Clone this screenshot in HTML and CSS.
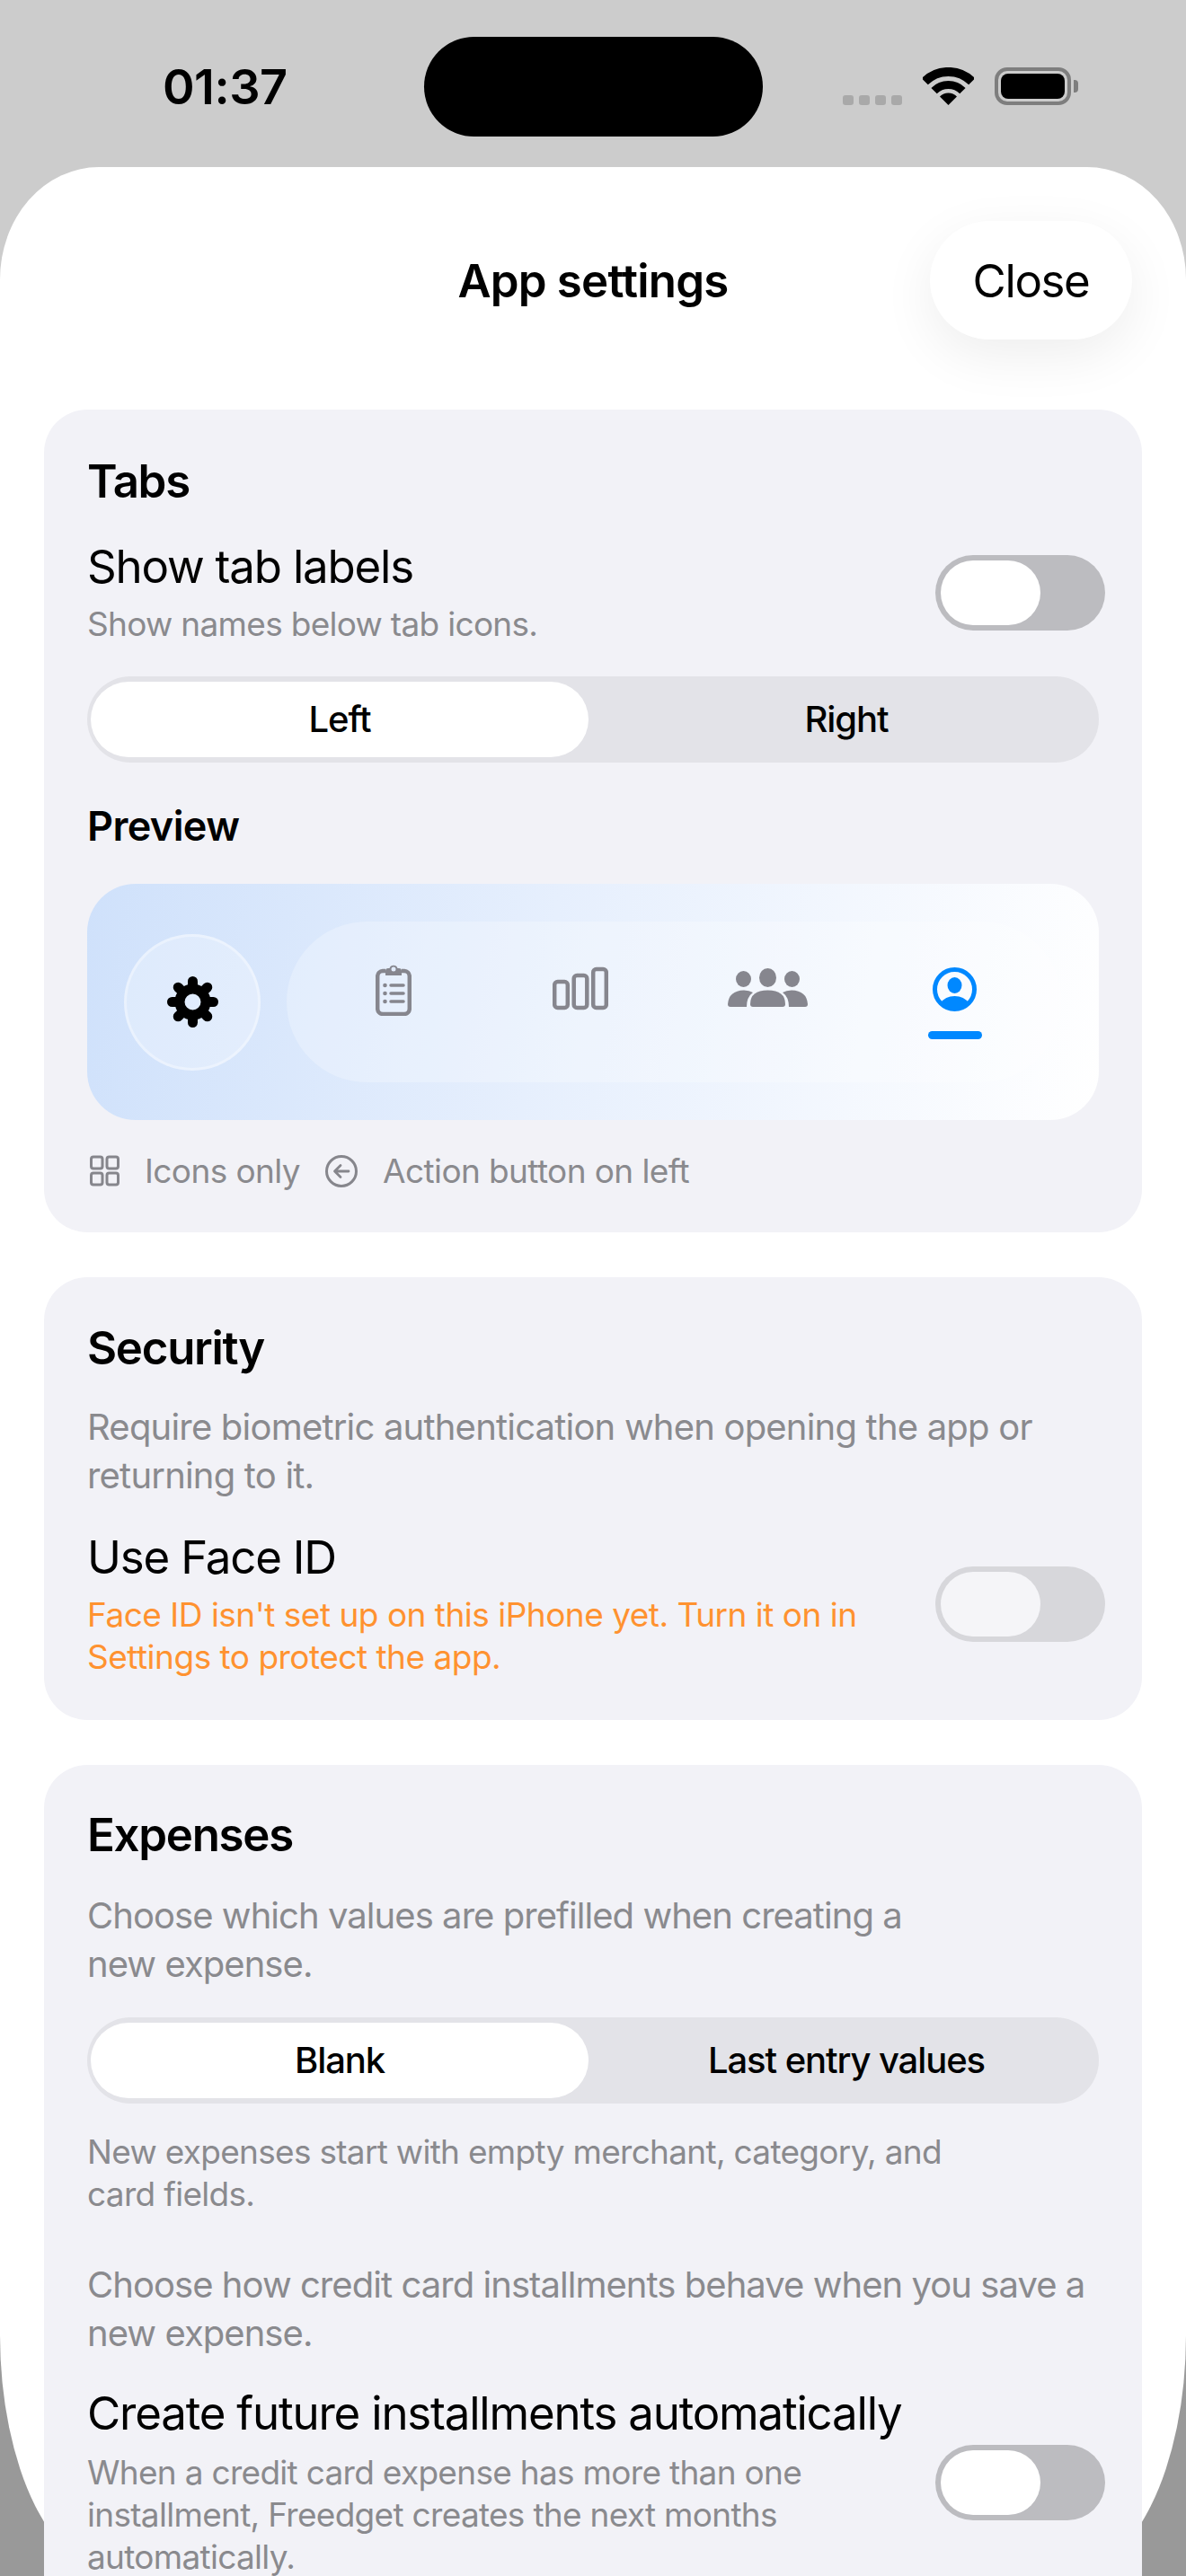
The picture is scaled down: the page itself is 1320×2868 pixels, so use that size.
FILE: index.html
```html
<!DOCTYPE html>
<html lang="en">
<head>
    <meta charset="UTF-8" />
    <meta name="viewport" content="width=device-width, initial-scale=1.0" />
    <title>App settings</title>
    <link rel="stylesheet" href="styles.css">
</head>
<body>
    <!-- Status bar -->
    <div class="status-bar">
        <div class="time">01:37</div>
        <div class="island"></div>
        <div class="signal"><span></span><span></span><span></span><span></span></div>
        <svg class="wifi" width="57" height="42" viewBox="0 0 57 42">
            <path d="M2.3 15.8A37 37 0 0 1 54.7 15.8" fill="none" stroke="#000" stroke-width="10"/>
            <path d="M12.6 26.1A22.5 22.5 0 0 1 44.4 26.1" fill="none" stroke="#000" stroke-width="9"/>
            <path d="M28.5 42L19 32.5A13.4 13.4 0 0 1 38 32.5Z" fill="#000"/>
        </svg>
        <div class="battery"><div class="battery-fill"></div></div>
    </div>

    <div class="sheet">
        <div class="sheet-header">
            <div class="sheet-title">App settings</div>
            <button class="close-btn">Close</button>
        </div>

        <!-- Tabs -->
        <div class="card card-tabs">
            <h2>Tabs</h2>
            <div class="setting-row">
                <div>
                    <div class="setting-name">Show tab labels</div>
                    <div class="setting-note">Show names below tab icons.</div>
                </div>
                <div class="toggle"><div class="thumb"></div></div>
            </div>
            <div class="segment">
                <div class="segment-item active">Left</div>
                <div class="segment-item">Right</div>
            </div>
            <h3>Preview</h3>
            <div class="preview">
                <div class="action-circle">
                    <svg width="57" height="57" viewBox="0 0 57 57" fill="none" stroke="#000">
                        <circle cx="28.5" cy="28.5" r="14.5" stroke-width="11"/>
                        <g stroke-width="11" stroke-linecap="round">
                            <path d="M28.5 12.5V5.500"/>
                            <path d="M28.5 12.5V5.500" transform="rotate(45 28.5 28.5)"/>
                            <path d="M28.5 12.5V5.500" transform="rotate(90 28.5 28.5)"/>
                            <path d="M28.5 12.5V5.500" transform="rotate(135 28.5 28.5)"/>
                            <path d="M28.5 12.5V5.500" transform="rotate(180 28.5 28.5)"/>
                            <path d="M28.5 12.5V5.500" transform="rotate(225 28.5 28.5)"/>
                            <path d="M28.5 12.5V5.500" transform="rotate(270 28.5 28.5)"/>
                            <path d="M28.5 12.5V5.500" transform="rotate(315 28.5 28.5)"/>
                        </g>
                    </svg>
                </div>
                <div class="tab-pill">
                    <div class="tab">
                        <div class="tab-icon">
                            <svg width="40" height="57" viewBox="0 0 40 57" fill="none" stroke="#86868e">
                                <path d="M11 7H8A6 6 0 0 0 2.2 13V49A6 6 0 0 0 8 55H32A6 6 0 0 0 37.8 49V13A6 6 0 0 0 32 7H29" stroke-width="4.5"/>
                                <path d="M11 12V7Q11 4 14 4H15.500A4.800 4.800 0 0 1 24.500 4H26Q29 4 29 7V12Z" fill="#86868e" stroke="none"/>
                                <circle cx="20" cy="5" r="2.500" fill="#e2ecfc" stroke="none"/>
                                <path d="M17 23H31M17 32H31M17 41H31" stroke-width="3.500" stroke-linecap="round"/>
                                <g fill="#86868e" stroke="none">
                                    <circle cx="10.500" cy="23" r="2.300"/>
                                    <circle cx="10.500" cy="32" r="2.300"/>
                                    <circle cx="10.500" cy="41" r="2.300"/>
                                </g>
                            </svg>
                        </div>
                        <div class="tab-line"></div>
                    </div>
                    <div class="tab">
                        <div class="tab-icon">
                            <svg width="62" height="57" viewBox="0 0 62 57" fill="none" stroke="#86868e" stroke-width="4.500">
                                <rect x="2.200" y="19" width="14.600" height="29" rx="3.500"/>
                                <rect x="23.700" y="12" width="14.600" height="36" rx="3.500"/>
                                <rect x="45.200" y="5" width="14.600" height="43" rx="3.500"/>
                            </svg>
                        </div>
                        <div class="tab-line"></div>
                    </div>
                    <div class="tab">
                        <div class="tab-icon">
                            <svg width="89" height="57" viewBox="0 0 89 57" fill="#86868e">
                                <ellipse cx="44.500" cy="14.500" rx="9.500" ry="10.500"/>
                                <ellipse cx="17.500" cy="16" rx="8.500" ry="9"/>
                                <ellipse cx="71.500" cy="16" rx="8.500" ry="9"/>
                                <path d="M25 44Q25 28.500 44.500 28.500Q64 28.500 64 44Q64 47 61 47H28Q25 47 25 44Z"/>
                                <path d="M0 44Q1 29 18 28.500Q24 28.500 28 31Q21 36 21 47H3Q0 47 0 44Z"/>
                                <path d="M89 44Q88 29 71 28.500Q65 28.500 61 31Q68 36 68 47H86Q89 47 89 44Z"/>
                            </svg>
                        </div>
                        <div class="tab-line"></div>
                    </div>
                    <div class="tab">
                        <div class="tab-icon">
                            <svg width="49" height="57" viewBox="0 0 49 57" fill="#0088ff">
                                <circle cx="24.500" cy="27.500" r="22" fill="none" stroke="#0088ff" stroke-width="5"/>
                                <ellipse cx="24.500" cy="23" rx="8" ry="9"/>
                                <path d="M8.500 43Q14 35 24.500 35Q35 35 40.500 43A22.500 22.500 0 0 1 8.500 43Z"/>
                            </svg>
                        </div>
                        <div class="tab-line current"></div>
                    </div>
                </div>
            </div>
            <div class="legend">
                <svg width="36" height="36" viewBox="0 0 36 36" fill="none" stroke="#86868c" stroke-width="3">
                    <rect x="4.500" y="2" width="12.500" height="13" rx="2.500"/>
                    <rect x="22" y="2" width="12.500" height="13" rx="2.500"/>
                    <rect x="4.500" y="20" width="12.500" height="13" rx="2.500"/>
                    <rect x="22" y="20" width="12.500" height="13" rx="2.500"/>
                </svg>
                <span>Icons only</span>
                <svg width="36" height="36" viewBox="0 0 36 36" fill="none" stroke="#86868c" stroke-width="3">
                    <circle cx="18" cy="18" r="16.500"/>
                    <path d="M26 18H11M17 11.500L10.500 18L17 24.500" stroke-width="2.800" stroke-linecap="round" stroke-linejoin="round"/>
                </svg>
                <span>Action button on left</span>
            </div>
        </div>

        <!-- Security -->
        <div class="card card-security">
            <h2>Security</h2>
            <p class="card-text">Require biometric authentication when opening the app or<br>returning to it.</p>
            <div class="setting-row row-faceid">
                <div>
                    <div class="setting-name">Use Face ID</div>
                    <div class="setting-note warning">Face ID isn't set up on this iPhone yet. Turn it on in<br>Settings to protect the app.</div>
                </div>
                <div class="toggle disabled"><div class="thumb"></div></div>
            </div>
        </div>

        <!-- Expenses -->
        <div class="card card-expenses">
            <h2>Expenses</h2>
            <p class="card-text">Choose which values are prefilled when creating a<br>new expense.</p>
            <div class="segment">
                <div class="segment-item active">Blank</div>
                <div class="segment-item">Last entry values</div>
            </div>
            <div class="setting-note segment-note">New expenses start with empty merchant, category, and<br>card fields.</div>
            <p class="card-text installments-text">Choose how credit card installments behave when you save a<br>new expense.</p>
            <div class="setting-row row-installments">
                <div>
                    <div class="setting-name">Create future installments automatically</div>
                    <div class="setting-note">When a credit card expense has more than one<br>installment, Freedget creates the next months<br>automatically.</div>
                </div>
                <div class="toggle"><div class="thumb"></div></div>
            </div>
        </div>
    </div>
</body>
</html>
```

FILE: styles.css
```css
html, body {
  margin: 0;
  height: 2868px;
  overflow: hidden;
}
body {
  font-family: Inter, "Liberation Sans", sans-serif;
  color: #000;
  background: linear-gradient(#cccccc 0, #cccccc 300px, #999999 2700px);
}

/* Status bar */
.status-bar {
  display: flex;
  align-items: flex-start;
  height: 186px;
  box-sizing: border-box;
  padding: 41px 0 0 181px;
}
.time {
  width: 139px;
  margin-top: 24px;
  font-size: 54px;
  line-height: 64px;
  font-weight: 600;
  letter-spacing: -0.5px;
}
.island {
  width: 377px;
  height: 111px;
  margin-left: 152px;
  background-color: #000;
  border-radius: 56px;
}
.signal {
  display: flex;
  gap: 6px;
  margin: 65px 0 0 89px;
}
.signal span {
  width: 12px;
  height: 11px;
  background-color: #a9a9a9;
  border-radius: 3px;
}
.wifi {
  margin: 34px 0 0 23px;
}
.battery {
  position: relative;
  width: 85px;
  height: 42px;
  margin: 34px 0 0 23px;
  box-sizing: border-box;
  padding: 3px;
  border: 4px solid #7e7e7e;
  border-radius: 14px;
}
.battery::after {
  content: "";
  position: absolute;
  left: 84px;
  top: 10px;
  width: 5px;
  height: 14px;
  background-color: #7e7e7e;
  border-radius: 0 4px 4px 0;
}
.battery-fill {
  height: 100%;
  background-color: #000;
  border-radius: 8px;
}

/* Sheet */
.sheet {
  height: 2682px;
  background-color: #fff;
  border-radius: 110px 110px 133px 133px / 125px 125px 268px 268px;
}
.sheet-header {
  display: grid;
  grid-template-columns: 1fr auto 1fr;
  align-items: center;
  padding: 60px 60px 78px;
}
.sheet-title {
  grid-column: 2;
  font-size: 51px;
  font-weight: 600;
  letter-spacing: -0.8px;
}
.close-btn {
  grid-column: 3;
  justify-self: end;
  width: 225px;
  height: 132px;
  padding: 0;
  font-family: inherit;
  font-size: 51px;
  letter-spacing: -1.4px;
  color: #000;
  background-color: #fff;
  border: none;
  border-radius: 66px;
  box-shadow: 0 18px 60px rgba(0, 0, 0, 0.07);
}

/* Cards */
.card {
  margin: 0 49px 50px;
  padding: 0 48px;
  background-color: #f2f2f7;
  border-radius: 48px;
}
.card-tabs {
  padding-top: 56px;
  padding-bottom: 44px;
}
.card-security {
  padding-top: 55px;
  padding-bottom: 47px;
}
.card-expenses {
  padding-top: 54px;
  padding-bottom: 60px;
}
h2 {
  margin: 0;
  font-size: 51px;
  line-height: 48px;
  font-weight: 600;
  letter-spacing: -1.3px;
}
h3 {
  margin: 44px 0 37px;
  font-size: 45px;
  line-height: 54px;
  font-weight: 600;
  letter-spacing: -0.6px;
}
.card-text {
  margin: 39px 0 0;
  font-size: 40px;
  line-height: 54px;
  letter-spacing: -0.95px;
  color: #8a8a8e;
}
.card-security .card-text {
  margin-top: 37px;
  letter-spacing: -0.8px;
}
.setting-row {
  display: flex;
  justify-content: space-between;
  align-items: center;
  margin-top: 41px;
  margin-right: -7px;
}
.setting-name {
  font-size: 51px;
  line-height: 60px;
  letter-spacing: -1.2px;
}
.setting-note {
  margin-top: 10px;
  font-size: 37px;
  line-height: 47px;
  letter-spacing: -0.7px;
  color: #8a8a8e;
}
.setting-note.warning {
  letter-spacing: -0.5px;
  color: #ff9230;
}
.row-faceid {
  margin-top: 34px;
}
.row-installments {
  margin-top: 32px;
}
.row-installments .setting-note {
  margin-top: 12px;
}
.segment-note {
  margin-top: 30px;
}
.card-text.installments-text {
  margin-top: 51px;
}

/* Toggle */
.toggle {
  flex: none;
  width: 189px;
  height: 84px;
  box-sizing: border-box;
  padding: 6px;
  background-color: #bcbcc0;
  border-radius: 42px;
}
.thumb {
  width: 111px;
  height: 72px;
  background-color: #fff;
  border-radius: 36px;
}
.toggle.disabled {
  background-color: #d7d7db;
}
.toggle.disabled .thumb {
  background-color: #f5f5f8;
}

/* Segmented control */
.segment {
  display: grid;
  grid-template-columns: 1fr 1fr;
  gap: 10px;
  margin-top: 35px;
  padding: 6px 4px;
  background-color: #e3e3e8;
  border-radius: 48px;
}
.card-expenses .segment {
  margin-top: 32px;
}
.segment-item {
  height: 84px;
  font-size: 40px;
  line-height: 84px;
  font-weight: 500;
  letter-spacing: -1.1px;
  text-align: center;
  border-radius: 42px;
}
.segment-item.active {
  background-color: #fff;
}

/* Preview */
.preview {
  display: flex;
  align-items: center;
  gap: 29px;
  height: 263px;
  padding: 0 41px;
  background: linear-gradient(100deg, #cfe1fb 0%, #e6effd 45%, #ffffff 100%);
  border-radius: 54px;
}
.action-circle {
  display: flex;
  flex: none;
  align-items: center;
  justify-content: center;
  width: 152px;
  height: 152px;
  box-sizing: border-box;
  background-color: rgba(255, 255, 255, 0.28);
  border: 3px solid rgba(255, 255, 255, 0.35);
  border-radius: 50%;
}
.tab-pill {
  display: grid;
  flex: 1;
  grid-template-columns: repeat(4, 1fr);
  align-items: center;
  height: 179px;
  padding: 0 15px;
  background-color: rgba(255, 255, 255, 0.25);
  border-radius: 90px;
}
.tab {
  display: flex;
  flex-direction: column;
  align-items: center;
  gap: 17px;
}
.tab-icon {
  display: flex;
  height: 57px;
}
.tab-line {
  width: 60px;
  height: 9px;
  border-radius: 5px;
}
.tab-line.current {
  background-color: #0088ff;
}

/* Legend under the preview */
.legend {
  display: flex;
  align-items: center;
  gap: 28px;
  margin-top: 33px;
  font-size: 37px;
  line-height: 48px;
  letter-spacing: -0.6px;
  color: #8a8a8e;
}
```
